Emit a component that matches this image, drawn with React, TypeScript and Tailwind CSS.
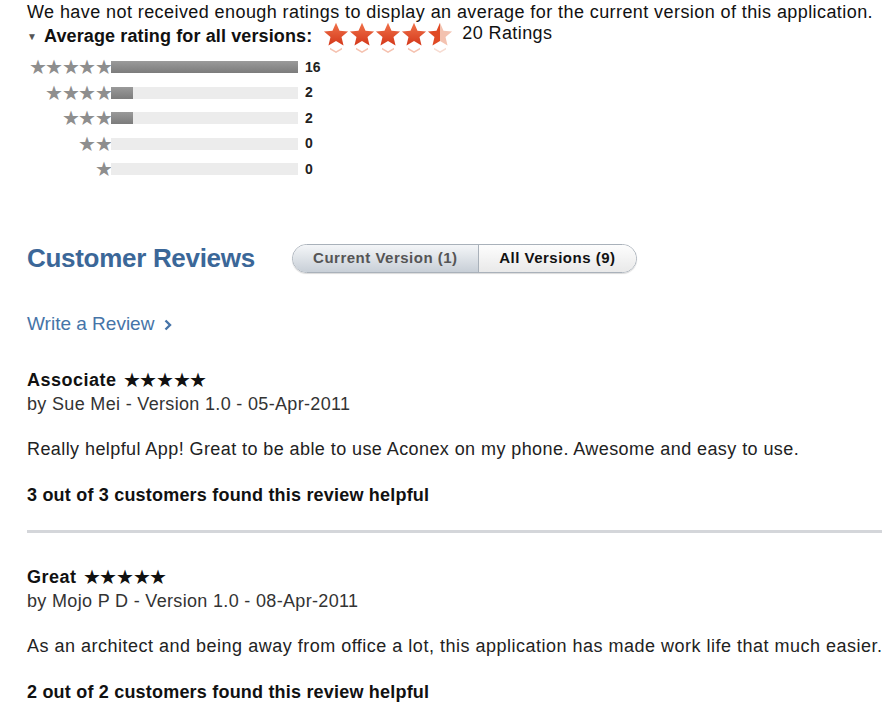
import React from "react";

const font = { fontFamily: '"Liberation Sans", Arial, sans-serif' };

function OrangeStar({ half = false, id }: { half?: boolean; id: string }) {
  const d = "M12 1.5l3.1 7.1 7.6.7-5.8 5 1.8 7.5L12 17.8l-6.7 4 1.8-7.5-5.8-5 7.6-.7z";
  return (
    <div className="flex flex-col items-center w-[26px]">
      <svg width="28" height="27" viewBox="0 0 24 24" className="-mx-[1px]">
        <defs>
          <linearGradient id={`g${id}`} x1="0" y1="0" x2="0" y2="1">
            <stop offset="0" stopColor="#f0724a" />
            <stop offset="1" stopColor="#d4381a" />
          </linearGradient>
          <linearGradient id={`h${id}`} x1="0" y1="0" x2="1" y2="0">
            <stop offset="0.5" stopColor="#e04a24" />
            <stop offset="0.5" stopColor="#f3c2b0" />
          </linearGradient>
        </defs>
        <path d={d} fill={half ? `url(#h${id})` : `url(#g${id})`} />
      </svg>
      <svg width="16" height="6" viewBox="0 0 18 7" className="mt-[-1px]">
        <path d="M2 1 L9 5 L16 1 L16 3 L9 7 L2 3z" fill={half ? "#f7dcd2" : "#f5c2b0"} />
      </svg>
    </div>
  );
}

function GrayStars({ n }: { n: number }) {
  return (
    <div className="w-[84px] flex justify-end text-[#8e8e8e] text-[20px] leading-none tracking-[-1.5px]">
      {"★".repeat(n)}
    </div>
  );
}

const bars = [
  { n: 5, count: 16, w: 187 },
  { n: 4, count: 2, w: 22 },
  { n: 3, count: 2, w: 22 },
  { n: 2, count: 0, w: 0 },
  { n: 1, count: 0, w: 0 },
];

function Review({
  title,
  by,
  body,
  helpful,
  bodyTrack,
}: {
  title: string;
  by: string;
  body: string;
  helpful: string;
  bodyTrack: string;
}) {
  return (
    <div className="text-[18px] text-[#111]">
      <div className="flex items-center gap-[6px] leading-[24px] h-[24px]">
        <span className="font-bold tracking-[0.5px]">{title}</span>
        <span className="text-[20px] tracking-[-1.3px] leading-none">★★★★★</span>
      </div>
      <div className="text-[#333] leading-[24px] tracking-[0.33px]">{by}</div>
      <div className={`text-[#222] leading-[24px] mt-[21px] whitespace-nowrap ${bodyTrack}`}>{body}</div>
      <div className="font-bold leading-[24px] mt-[22px] tracking-[0.2px]">{helpful}</div>
    </div>
  );
}

export default function App() {
  return (
    <div className="w-[882px] h-[719px] bg-white overflow-hidden pl-[27px]" style={font}>
      <div className="text-[18px] text-[#111] leading-[24px] tracking-[0.42px] whitespace-nowrap">
        We have not received enough ratings to display an average for the current version of this application.
      </div>
      <div className="flex items-start h-[24px]">
        <div className="flex items-center h-[24px] text-[18px] font-bold text-[#111] whitespace-nowrap tracking-[0.12px]">
          <span className="text-[10px] text-[#555] mr-[7px]">▼</span>
          Average rating for all versions:
        </div>
        <div className="flex ml-[11px] mt-[-3px]">
          <OrangeStar id="a" />
          <OrangeStar id="b" />
          <OrangeStar id="c" />
          <OrangeStar id="d" />
          <OrangeStar id="e" half />
        </div>
        <div className="ml-[9px] mt-[-3px] text-[18px] leading-[24px] text-[#111] tracking-[0.4px]">20 Ratings</div>
      </div>

      <div className="flex flex-col gap-[11.5px] mt-[12px]">
        {bars.map((b) => (
          <div key={b.n} className="flex items-center h-[14px]">
            <GrayStars n={b.n} />
            <div className="ml-[0px] w-[187px] h-[12px] bg-[#ececec]">
              <div
                className="h-full bg-gradient-to-b from-[#9a9a9a] to-[#7c7c7c]"
                style={{ width: b.w }}
              />
            </div>
            <div className="ml-[7px] text-[14px] text-[#222] font-bold">{b.count}</div>
          </div>
        ))}
      </div>

      <div className="flex items-center mt-[66px] h-[32px]">
        <div className="text-[26px] font-bold text-[#3b6798] tracking-[-0.3px]">Customer Reviews</div>
        <div className="ml-[37px] flex w-[345px] h-[29px] rounded-full border border-[#a9b1ba] overflow-hidden shadow-[0_1px_1px_rgba(0,0,0,0.15)]">
          <div className="w-[186px] flex items-center justify-center bg-gradient-to-b from-[#f4f6f8] to-[#c8cfd7] border-r border-[#a9b1ba] text-[15px] font-bold text-[#555] tracking-[0.5px]">
            Current Version (1)
          </div>
          <div className="flex-1 flex items-center justify-center bg-gradient-to-b from-[#fdfdfd] to-[#e9e9e9] text-[15px] font-bold text-[#111] tracking-[0.5px]">
            All Versions (9)
          </div>
        </div>
      </div>

      <div className="mt-[38px] text-[19px] text-[#4674a8] leading-[24px] flex items-center">
        Write a Review
        <svg width="8" height="12" viewBox="0 0 8 12" className="ml-[10px] mt-[2px]">
          <path d="M1.5 1.5 L6 6 L1.5 10.5" stroke="#4674a8" strokeWidth="2.4" fill="none" />
        </svg>
      </div>

      <div className="mt-[32px]">
        <Review
          title="Associate"
          by="by Sue Mei - Version 1.0 - 05-Apr-2011"
          body="Really helpful App! Great to be able to use Aconex on my phone. Awesome and easy to use."
          helpful="3 out of 3 customers found this review helpful"
          bodyTrack="tracking-[0.42px]"
        />
      </div>

      <div className="mt-[23px] h-[3px] bg-[#d4d6da]" />

      <div className="mt-[32px]">
        <Review
          title="Great"
          by="by Mojo P D - Version 1.0 - 08-Apr-2011"
          body="As an architect and being away from office a lot, this application has made work life that much easier."
          helpful="2 out of 2 customers found this review helpful"
          bodyTrack="tracking-[0.5px]"
        />
      </div>
    </div>
  );
}
